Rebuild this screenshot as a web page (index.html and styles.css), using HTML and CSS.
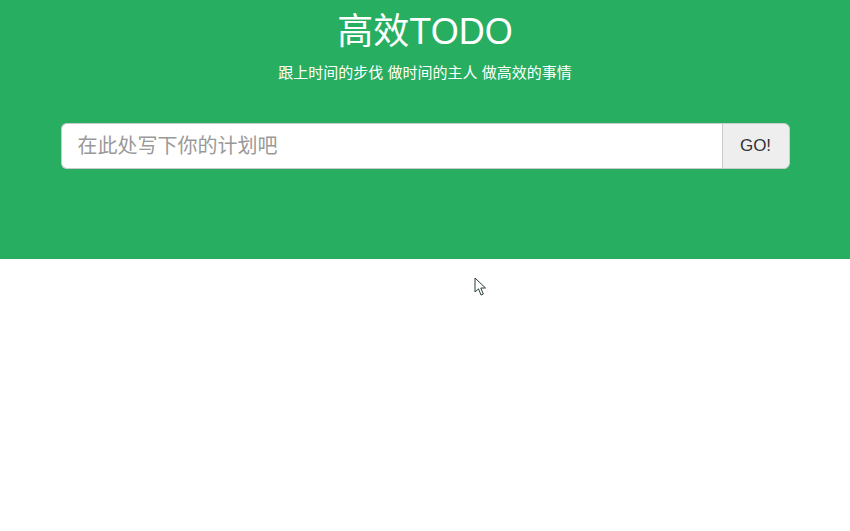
FILE: index.html
```html
<!DOCTYPE html>
<html lang="zh">
<head>
<meta charset="utf-8">
<title>高效TODO</title>
<link rel="stylesheet" href="styles.css">
</head>
<body>
<header class="hero">
  <h1 class="title">高效TODO</h1>
  <p class="subtitle">跟上时间的步伐 做时间的主人 做高效的事情</p>
  <form class="input-group">
    <input class="plan-input" type="text" placeholder="在此处写下你的计划吧">
    <button class="go-btn" type="button">GO!</button>
  </form>
</header>
<main class="content">
  <svg class="cursor" width="14" height="20" viewBox="0 0 14 20">
    <path d="M1 1 L1 15 L4.5 11.8 L7 18 L9.3 17 L6.8 11 L11.5 11 Z" fill="#fff" stroke="#2c3e3a" stroke-width="1" stroke-linejoin="round"/>
  </svg>
</main>
</body>
</html>
```
FILE: styles.css
```css
* { box-sizing: border-box; }
html, body { margin: 0; padding: 0; background: #fff; }
body {
  font-family: "Liberation Sans", Arial, "Noto Sans CJK SC", sans-serif;
  color: #333;
}
.hero {
  background: #27ae60;
  height: 259px;
  padding-top: 10px;
  display: flex;
  flex-direction: column;
  align-items: center;
}
.title {
  margin: 0;
  font-size: 36px;
  font-weight: 400;
  line-height: 44px;
  color: #fff;
}
.subtitle {
  margin: 9px 0 0;
  font-size: 15px;
  line-height: 20px;
  color: #fff;
}
.input-group {
  margin-top: 40px;
  width: 729px;
  display: flex;
  height: 46px;
}
.plan-input {
  flex: 1;
  height: 46px;
  border: 1px solid #ccc;
  border-right: none;
  border-radius: 6px 0 0 6px;
  padding: 10px 16px;
  font-size: 20px;
  font-family: inherit;
  color: #555;
  outline: none;
}
.plan-input::placeholder { color: #999; }
.go-btn {
  width: 68px;
  height: 46px;
  border: 1px solid #ccc;
  border-radius: 0 6px 6px 0;
  background: #eeeeee;
  color: #333;
  font-family: inherit;
  font-size: 17px;
  padding: 0;
}
.content { position: relative; height: 272px; }
.cursor { position: absolute; left: 474px; top: 18px; }
```
